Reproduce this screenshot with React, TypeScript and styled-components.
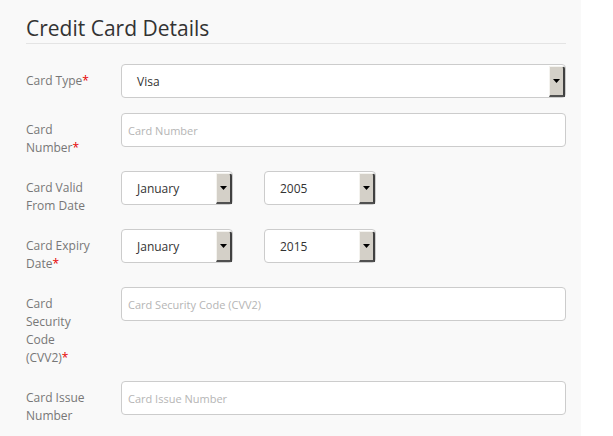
import React from 'react'
import styled, { createGlobalStyle } from 'styled-components'

const GlobalStyle = createGlobalStyle`
  html, body {
    margin: 0;
    padding: 0;
    background: #ffffff;
    font-family: 'Open Sans', 'Liberation Sans', sans-serif;
  }
`

const Panel = styled.div`
  width: 581px;
  min-height: 436px;
  box-sizing: border-box;
  background: #f9f9f9;
  padding: 14px 15px 0 26px;
`

const Title = styled.h2`
  margin: 0;
  font-size: 21px;
  font-weight: 400;
  line-height: 28px;
  color: #333333;
  padding-bottom: 1px;
  border-bottom: 1px solid #e4e4e4;
`

const Form = styled.form`
  padding-top: 20px;
  display: flex;
  flex-direction: column;
  gap: 15px;
`

const Row = styled.div`
  display: flex;
  align-items: flex-start;
`

const Label = styled.label`
  width: 72px;
  flex: none;
  margin-right: 23px;
  padding-top: 8px;
  margin-bottom: -1px;
  font-size: 12px;
  line-height: 18px;
  color: #777777;
`

const Req = styled.span`
  color: #e60000;
`

const Field = styled.div`
  flex: 1;
  display: flex;
  gap: 31px;
`

const Input = styled.input`
  width: 100%;
  height: 34px;
  box-sizing: border-box;
  border: 1px solid #cccccc;
  border-radius: 4px;
  background: #ffffff;
  padding: 0 6px;
  font-family: inherit;
  font-size: 11px;
  color: #333333;
  outline: none;
  &::placeholder {
    color: #b5b5b5;
  }
`

const SelectBox = styled.div<{ $width?: number }>`
  position: relative;
  width: ${p => (p.$width ? `${p.$width}px` : '100%')};
  height: 34px;
  box-sizing: border-box;
  border: 1px solid #cccccc;
  border-radius: 4px;
  background: #ffffff;
  display: flex;
  align-items: center;
  padding-left: 15px;
  font-size: 12px;
  color: #333333;
`

const ArrowButton = styled.span`
  position: absolute;
  top: 1px;
  right: 0;
  bottom: 0;
  width: 16px;
  box-sizing: border-box;
  background: #d4d0c8;
  border-left: 1px solid #f4f3ef;
  border-top: 1px solid #f4f3ef;
  border-right: 2px solid #404040;
  border-bottom: 2px solid #505050;
  border-top-right-radius: 3px;
  display: flex;
  align-items: center;
  justify-content: center;
`

const Select = ({ value, width }: { value: string; width?: number }) => (
  <SelectBox $width={width}>
    {value}
    <ArrowButton>
      <svg width="7" height="4" viewBox="0 0 7 4">
        <path d="M0 0h7L3.5 4z" fill="#000" />
      </svg>
    </ArrowButton>
  </SelectBox>
)

export default function App() {
  return (
    <>
      <GlobalStyle />
      <Panel>
        <Title>Credit Card Details</Title>
        <Form>
          <Row>
            <Label>
              Card Type<Req>*</Req>
            </Label>
            <Field>
              <Select value="Visa" />
            </Field>
          </Row>
          <Row>
            <Label>
              Card Number<Req>*</Req>
            </Label>
            <Field>
              <Input placeholder="Card Number" />
            </Field>
          </Row>
          <Row>
            <Label>Card Valid From Date</Label>
            <Field>
              <Select value="January" width={112} />
              <Select value="2005" width={112} />
            </Field>
          </Row>
          <Row>
            <Label>
              Card Expiry Date<Req>*</Req>
            </Label>
            <Field>
              <Select value="January" width={112} />
              <Select value="2015" width={112} />
            </Field>
          </Row>
          <Row>
            <Label>
              Card Security Code (CVV2)<Req>*</Req>
            </Label>
            <Field>
              <Input placeholder="Card Security Code (CVV2)" />
            </Field>
          </Row>
          <Row>
            <Label>Card Issue Number</Label>
            <Field>
              <Input placeholder="Card Issue Number" />
            </Field>
          </Row>
        </Form>
      </Panel>
    </>
  )
}
